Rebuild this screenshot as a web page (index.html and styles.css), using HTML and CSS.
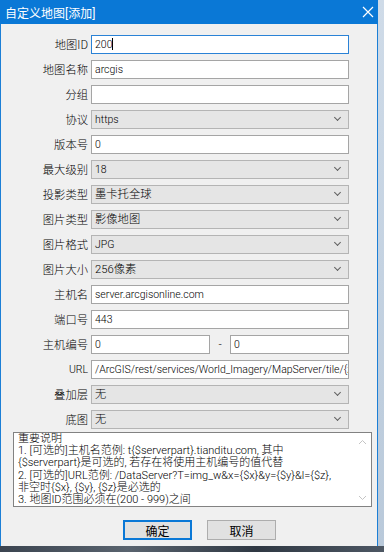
FILE: index.html
```html
<!DOCTYPE html>
<html lang="zh-CN">
<head>
    <meta charset="UTF-8">
    <title>自定义地图[添加]</title>
    <link rel="stylesheet" href="styles.css">
</head>
<body>
    <div class="screen">
        <div class="window">
            <!-- Title Bar -->
            <div class="titlebar">
                <span class="title">自定义地图[添加]</span>
                <svg class="close" width="12" height="12" viewBox="0 0 12 12">
                    <path d="M1,1L11,11M11,1L1,11" stroke="#fff" stroke-width="1.2" fill="none"/>
                </svg>
            </div>

            <div class="body">
                <!-- Form -->
                <div class="form">
                    <label>地图ID</label>
                    <div class="field focus">200<span class="caret"></span></div>

                    <label>地图名称</label>
                    <div class="field">arcgis</div>

                    <label>分组</label>
                    <div class="field"></div>

                    <label>协议</label>
                    <div class="combo">https</div>

                    <label>版本号</label>
                    <div class="field">0</div>

                    <label>最大级别</label>
                    <div class="combo">18</div>

                    <label>投影类型</label>
                    <div class="combo cjk">墨卡托全球</div>

                    <label>图片类型</label>
                    <div class="combo cjk">影像地图</div>

                    <label>图片格式</label>
                    <div class="combo">JPG</div>

                    <label>图片大小</label>
                    <div class="combo cjk">256像素</div>

                    <label>主机名</label>
                    <div class="field">server.arcgisonline.com</div>

                    <label>端口号</label>
                    <div class="field">443</div>

                    <label>主机编号</label>
                    <div class="pair">
                        <div class="field">0</div>
                        <span class="dash">-</span>
                        <div class="field">0</div>
                    </div>

                    <label class="latin">URL</label>
                    <div class="field">/ArcGIS/rest/services/World_Imagery/MapServer/tile/{z}/{y}/{x}</div>

                    <label>叠加层</label>
                    <div class="combo cjk">无</div>

                    <label>底图</label>
                    <div class="combo cjk">无</div>
                </div>

                <!-- Notes -->
                <div class="notes">
                    <div class="notes-text">
                        <p>重要说明</p>
                        <p>1. [可选的]主机名范例: t{$serverpart}.tianditu.com, 其中</p>
                        <p>{$serverpart}是可选的, 若存在将使用主机编号的值代替</p>
                        <p>2. [可选的]URL范例: /DataServer?T=img_w&amp;x={$x}&amp;y={$y}&amp;l={$z},</p>
                        <p>非空时{$x}, {$y}, {$z}是必选的</p>
                        <p>3. 地图ID范围必须在(200 - 999)之间</p>
                    </div>
                    <div class="scrollbar">
                        <svg width="9" height="6" viewBox="0 0 9 6"><path d="M1,5L4.5,1.5L8,5" stroke="#c4c4c4" fill="none"/></svg>
                        <svg width="9" height="6" viewBox="0 0 9 6"><path d="M1,1L4.5,4.5L8,1" stroke="#c4c4c4" fill="none"/></svg>
                    </div>
                </div>

                <!-- Buttons -->
                <div class="buttons">
                    <button class="default">确定</button>
                    <button>取消</button>
                </div>
            </div>
        </div>
        <div class="side"></div>
    </div>
    <div class="desktop"></div>
</body>
</html>
```

FILE: styles.css
```css
* {
    margin: 0;
    padding: 0;
    box-sizing: border-box;
}

body {
    width: 384px;
    height: 552px;
    overflow: hidden;
    background: #2d3845;
    font-family: "Roboto", "Noto Sans CJK SC", sans-serif;
    font-size: 11.3px;
    font-weight: 300;
    color: #000;
}

.screen {
    display: flex;
    height: 546px;
}

/* Window */
.window {
    width: 378px;
    background: #f0f0f0;
    border-left: 1px solid #1c7fd6;
    border-right: 1px solid #1c7fd6;
    display: flex;
    flex-direction: column;
}

.side {
    flex: 1;
    background: linear-gradient(#cfdbe8, #b9c9da);
}

.desktop {
    height: 6px;
    background: linear-gradient(90deg, #3b4450, #59636e, #2f3843, #4d5763);
}

/* Title Bar */
.titlebar {
    height: 24px;
    background: #0a78d6;
    display: flex;
    align-items: center;
    justify-content: space-between;
    padding: 0 8px 0 5px;
    margin: 0 -7px 0 -1px;
}

.title {
    color: #fff;
    font-size: 12px;
    font-weight: 400;
}

.close {
    margin-right: 2px;
}

.body {
    flex: 1;
    display: flex;
    flex-direction: column;
}

/* Form */
.form {
    display: grid;
    grid-template-columns: 87px 258px;
    column-gap: 3px;
    row-gap: 6px;
    grid-auto-rows: 19px;
    margin-top: 11px;
}

.form label {
    font-family: "Noto Sans CJK SC", sans-serif;
    text-align: right;
    line-height: 19px;
    white-space: nowrap;
}

.form label.latin {
    font-family: "Roboto", sans-serif;
    font-size: 10.5px;
}

.field,
.combo {
    height: 19px;
    line-height: 17px;
    padding: 0 3px;
    font-size: 10.5px;
    white-space: nowrap;
    overflow: hidden;
}

.combo.cjk {
    font-size: 11.3px;
}

.field {
    background: #fff;
    border: 1px solid #a5a5a5;
}

.field.focus {
    border-color: #2a82d6;
}

.caret {
    display: inline-block;
    width: 1px;
    height: 12px;
    background: #000;
    vertical-align: -2px;
}

.combo {
    position: relative;
    background: #e5e5e5;
    border: 1px solid #b4b4b4;
}

.combo::after {
    content: "";
    position: absolute;
    right: 8px;
    top: 4px;
    width: 4px;
    height: 4px;
    border-right: 1px solid #606060;
    border-bottom: 1px solid #606060;
    transform: rotate(45deg);
}

.pair {
    display: flex;
}

.pair .field {
    width: 119px;
}

.dash {
    width: 20px;
    text-align: center;
    line-height: 19px;
}

/* Notes */
.notes {
    display: flex;
    margin: 3px 5px 0 12px;
    height: 75px;
    background: #fff;
    border: 1px solid #828282;
}

.notes-text {
    flex: 1;
    padding: 0 0 0 4px;
    font-size: 11px;
    line-height: 12.2px;
    white-space: nowrap;
    overflow: hidden;
}

.scrollbar {
    width: 17px;
    display: flex;
    flex-direction: column;
    justify-content: space-between;
    align-items: center;
    padding: 6px 0 5px;
}

/* Buttons */
.buttons {
    display: flex;
    gap: 15px;
    margin: 13px 0 0 122px;
}

.buttons button {
    width: 69px;
    height: 20px;
    background: #e1e1e1;
    border: 1px solid #adadad;
    font-family: "Noto Sans CJK SC", sans-serif;
    font-size: 12px;
    font-weight: 400;
}

.buttons button.default {
    border: 2px solid #0a78d6;
}
```
